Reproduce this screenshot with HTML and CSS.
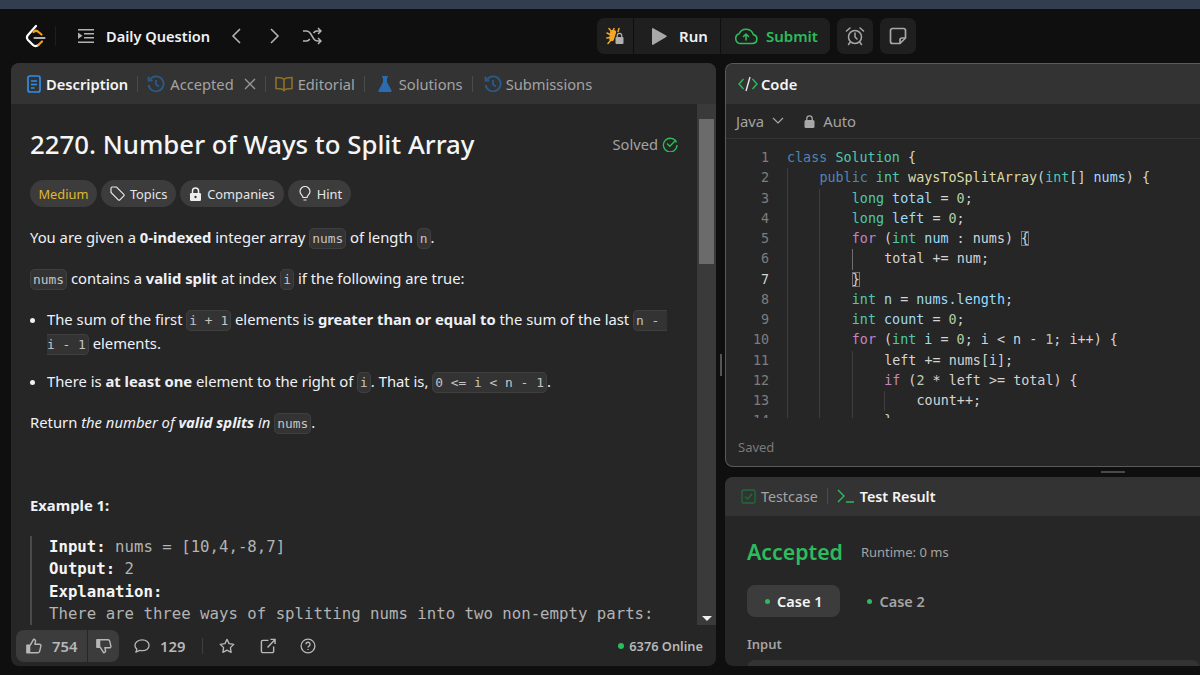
FILE: index.html
```html
<!DOCTYPE html>
<html lang="en">
<head>
  <meta charset="UTF-8" />
  <title>Number of Ways to Split Array</title>
  <link rel="stylesheet" href="styles.css">
</head>
<body>
  <div class="top-strip"></div>

  <nav class="navbar">
    <div class="nav-left">
      <svg class="logo" width="22" height="24" viewBox="0 0 22 24" fill="none" stroke-width="2.2" stroke-linecap="round" stroke-linejoin="round">
        <path d="M11 2 3 11c-1.300 1.500-1.300 3.500 0 5l5 5c1.500 1.500 3.800 1.500 5.300 0" stroke="#fff"/>
        <path d="M8.500 8c1.500-1.500 3.500-1.500 5 0l3 2.500M13.300 21l3.700-3.500" stroke="#f89f1b"/>
        <path d="M9.500 14h10" stroke="#b3b3b3"/>
      </svg>
      <span class="nav-sep"></span>
      <svg class="list-icon" width="18" height="18" viewBox="0 0 18 18" fill="#b3b3b3">
        <rect x="1" y="2" width="16" height="1.500"/><rect x="7" y="6" width="10" height="1.500"/><rect x="7" y="10" width="10" height="1.500"/><rect x="1" y="14.500" width="16" height="1.500"/><path d="M1 5.500 5.500 8.800 1 12z"/>
      </svg>
      <span class="nav-title">Daily Question</span>
      <svg class="chev chev-l" width="12" height="18" viewBox="0 0 12 18" fill="none" stroke="#b3b3b3" stroke-width="1.600"><path d="M10 2 3 9l7 7"/></svg>
      <svg class="chev chev-r" width="12" height="18" viewBox="0 0 12 18" fill="none" stroke="#b3b3b3" stroke-width="1.600"><path d="m2 2 7 7-7 7"/></svg>
      <svg class="shuffle" width="20" height="18" viewBox="0 0 20 18" fill="none" stroke="#b3b3b3" stroke-width="1.500"><path d="M1 4h3.500c2 0 3 1 4 2.500l3 5c1 1.500 2 2.500 4 2.500H19M1 14h3.500c1.500 0 2.500-.8 3.300-2M11.500 6c.8-1.200 1.800-2 3.500-2h4M16 1l3 3-3 3M16 11l3 3-3 3"/></svg>
    </div>
    <div class="nav-center">
      <div class="action-group">
        <span class="action action-bug">
          <svg width="18" height="18" viewBox="0 0 18 18" fill="none" stroke="#f5a623" stroke-width="1.500" stroke-linecap="round"><path d="M3 1.500 5 4M1 6l3 1.500M.8 11 4 10.500M2 16.500l2.500-3M7 4 8 1.500M13 1.500l-1 3"/><path d="M5 4.500c2-1.500 4-1 4.500.5L7 13c-1.500 1-3 0-3-1.500z" fill="#f5a623"/><rect x="9.500" y="10" width="8" height="7" rx="1" fill="#b0b0b0" stroke="none"/><path d="M11.200 10V8.700a2.300 2.300 0 0 1 4.600 0V10" stroke="#b0b0b0" stroke-width="1.200"/></svg>
        </span>
        <span class="action action-run">
          <svg width="15" height="17" viewBox="0 0 15 17"><path d="M0 1c0-.7.600-1.100 1.200-.8l13 7.300c.6.300.6 1.200 0 1.500l-13 7.800C.6 17.100 0 16.700 0 16z" fill="#a8a8a8"/></svg>
          Run
        </span>
        <span class="action action-submit">
          <svg width="24" height="18" viewBox="0 0 24 18" fill="none" stroke="#2cbb5d" stroke-width="1.600" stroke-linejoin="round"><path d="M6 16.500h12.500a4.500 4.500 0 0 0 .8-8.900A7.500 7.500 0 0 0 5.200 6.800 5 5 0 0 0 6 16.500z"/><path d="M12 13V7M9.500 9.500 12 7l2.500 2.500" stroke-linecap="round"/></svg>
          Submit
        </span>
      </div>
      <span class="icon-btn">
        <svg width="20" height="20" viewBox="0 0 20 20" fill="none" stroke="#a8a8a8" stroke-width="1.500"><circle cx="10" cy="11" r="6.500"/><path d="M10 7v4l2 2M1.500 5 5 2M18.500 5 15 2M5 16.500 3.500 18.500M15 16.500l1.500 2" stroke-linecap="round"/></svg>
      </span>
      <span class="icon-btn">
        <svg width="18" height="18" viewBox="0 0 18 18" fill="none" stroke="#a8a8a8" stroke-width="1.700" stroke-linejoin="round"><path d="M3.500 1.500h11a2 2 0 0 1 2 2V11l-5.500 5.500H3.500a2 2 0 0 1-2-2v-11a2 2 0 0 1 2-2z"/><path d="M16.500 11H13a2 2 0 0 0-2 2v3.500"/></svg>
      </span>
    </div>
  </nav>

  <main class="panels">
    <section class="panel panel-desc">
      <div class="tabs">
        <span class="tab tab-active">
          <svg width="14" height="18" viewBox="0 0 14 18" fill="none" stroke="#2f8fe8" stroke-width="1.700"><rect x="1" y="1" width="12" height="16" rx="2"/><path d="M4 6h6M4 9.500h6M4 13h3.500"/></svg>
          Description
        </span>
        <span class="tab-sep"></span>
        <span class="tab">
          <svg width="18" height="18" viewBox="0 0 18 18" fill="none" stroke="#2a5a88" stroke-width="1.800"><path d="M3 4.500A7.500 7.500 0 1 1 1.700 10"/><path d="M1.500 1.500v4h4M9 5v4.500l3 2"/></svg>
          Accepted
          <svg class="tab-close" width="12" height="12" viewBox="0 0 12 12" stroke="#999" stroke-width="1.400"><path d="m1 1 10 10M11 1 1 11"/></svg>
        </span>
        <span class="tab-sep"></span>
        <span class="tab">
          <svg width="18" height="16" viewBox="0 0 18 16" fill="none" stroke="#8a6d2a" stroke-width="1.700"><path d="M9 3.500C8 2 6 1.500 1 1.500v11c5 0 7 .5 8 2 1-1.500 3-2 8-2v-11c-5 0-7 .5-8 2zM9 3.500v11"/></svg>
          Editorial
        </span>
        <span class="tab-sep"></span>
        <span class="tab tab-flask">
          <svg width="14" height="18" viewBox="0 0 14 18"><path d="M4 1h6v1.500H9v4.500l4.500 8.500c.4.800-.1 1.500-1 1.500h-11c-.9 0-1.400-.7-1-1.500L5 7V2.500H4z" fill="#2b6cb0"/></svg>
          Solutions
        </span>
        <span class="tab-sep"></span>
        <span class="tab tab-subs">
          <svg width="18" height="18" viewBox="0 0 18 18" fill="none" stroke="#2a5a88" stroke-width="1.800"><path d="M3 4.500A7.500 7.500 0 1 1 1.700 10"/><path d="M1.500 1.500v4h4M9 5v4.500l3 2"/></svg>
          Submissions
        </span>
      </div>

      <div class="desc-body">
        <div class="desc-content">
          <div class="title-row">
            <h1>2270. Number of Ways to Split Array</h1>
            <span class="solved">Solved
              <svg width="16" height="16" viewBox="0 0 16 16" fill="none" stroke="#2cbb5d" stroke-width="1.300"><path d="M14.500 6.500A6.800 6.800 0 1 0 15 9"/><path d="m5 7.500 2.800 2.800L14 4"/></svg>
            </span>
          </div>
          <div class="chips">
            <span class="chip chip-medium">Medium</span>
            <span class="chip">
              <svg width="15" height="15" viewBox="0 0 15 15" fill="none" stroke="#e6e6e6" stroke-width="1.200"><path d="M1 2.200C1 1.500 1.500 1 2.200 1h4.300l7.300 7.300c.4.500.4 1.200 0 1.600l-3.900 3.900c-.4.400-1.100.4-1.600 0L1 6.500z"/></svg>
              Topics
            </span>
            <span class="chip">
              <svg width="13" height="14" viewBox="0 0 13 14" fill="#eee"><rect x="1" y="6" width="11" height="8" rx="1.200"/><path d="M3.500 6V4a3 3 0 0 1 6 0v2" fill="none" stroke="#eee" stroke-width="1.500"/><circle cx="6.500" cy="10" r="1.200" fill="#3c3c3c"/></svg>
              Companies
            </span>
            <span class="chip chip-hint">
              <svg width="12" height="16" viewBox="0 0 12 16" fill="none" stroke="#e6e6e6" stroke-width="1.200"><path d="M4 11.500C4 9.500 1 8.500 1 5.500a5 5 0 0 1 10 0c0 3-3 4-3 6zM4.500 14h3"/></svg>
              Hint
            </span>
          </div>

          <p>You are given a <b>0-indexed</b> integer array <code>nums</code> of length <code>n</code>.</p>
          <p><code>nums</code> contains a <b>valid split</b> at index <code>i</code> if the following are true:</p>
          <ul>
            <li>The sum of the first <code>i + 1</code> elements is <b>greater than or equal to</b> the sum of the last <code>n -&nbsp;<br>i - 1</code> elements.</li>
            <li>There is <b>at least one</b> element to the right of <code>i</code>. That is, <code>0 &lt;= i &lt; n - 1</code>.</li>
          </ul>
          <p>Return <i>the number of <b>valid splits</b> in</i> <code>nums</code>.</p>
          <p class="example-title"><b>Example 1:</b></p>
          <pre><b>Input:</b> nums = [10,4,-8,7]
<b>Output:</b> 2
<b>Explanation:</b>
There are three ways of splitting nums into two non-empty parts:</pre>
        </div>
        <div class="scrollbar">
          <div class="scroll-thumb"></div>
          <div class="scroll-arrow"></div>
        </div>
      </div>

      <div class="desc-footer">
        <div class="vote">
          <span class="vote-up">
            <svg width="16" height="16" viewBox="0 0 18 18" fill="none" stroke="#b8b8b8" stroke-width="1.600" stroke-linejoin="round"><path d="M1 8h3v8.500H1z" fill="#b8b8b8"/><path d="M4.500 8.500 8.500 1.500c1.500 0 2.500 1 2.200 2.500l-.7 3h5c1.200 0 2 1 1.700 2.200l-1.300 5.600c-.2 1-1 1.700-2 1.700H4.500"/></svg>
            754
          </span>
          <span class="vote-down">
            <svg width="16" height="16" viewBox="0 0 18 18" fill="none" stroke="#b8b8b8" stroke-width="1.600" stroke-linejoin="round"><path d="M1 2h3v8.500H1z" fill="#b8b8b8"/><path d="M4.500 10 8.500 16.500c1.500 0 2.500-1 2.200-2.500l-.7-3h5c1.200 0 2-1 1.700-2.200l-1.300-5.300c-.2-1-1-1.500-2-1.500H4.500"/></svg>
          </span>
        </div>
        <span class="foot-comment">
          <svg width="16" height="16" viewBox="0 0 17 17" fill="none" stroke="#b8b8b8" stroke-width="1.400" stroke-linejoin="round"><path d="M8.800 2C13 2 16 4.500 16 7.800s-3 5.700-7.200 5.700c-1 0-2-.1-2.800-.4L2 15l1-3.200C1.700 10.700 1 9.300 1 7.800 1 4.500 4.500 2 8.800 2z"/></svg>
          129
        </span>
        <span class="foot-sep"></span>
        <svg class="foot-icon" width="16" height="16" viewBox="0 0 17 17" fill="none" stroke="#b8b8b8" stroke-width="1.400" stroke-linejoin="round"><path d="m8.500 1.500 2.200 4.500 5 .7-3.600 3.500.8 5-4.400-2.400-4.400 2.400.8-5L1.300 6.700l5-.7z"/></svg>
        <svg class="foot-icon" width="16" height="16" viewBox="0 0 17 17" fill="none" stroke="#b8b8b8" stroke-width="1.500"><path d="M9 2.500H3A1.500 1.500 0 0 0 1.500 4v10A1.500 1.500 0 0 0 3 15.500h10a1.500 1.500 0 0 0 1.500-1.500V9M8 10l8-8.500M11 1.500h5v5"/></svg>
        <svg class="foot-icon" width="16" height="16" viewBox="0 0 17 17" fill="none" stroke="#b8b8b8" stroke-width="1.400"><circle cx="8.500" cy="8.500" r="7.300"/><path d="M6.300 6.700a2.200 2.200 0 1 1 3.300 1.900c-.7.400-1.100.8-1.100 1.500M8.500 11.600v1.200"/></svg>
        <span class="online"><span class="online-dot"></span>6376 Online</span>
      </div>
    </section>

    <div class="gutter-v"><span class="grip-v"></span></div>

    <div class="right-col">
      <section class="panel panel-code">
        <div class="tabs">
          <span class="tab tab-active">
            <svg width="20" height="16" viewBox="0 0 20 16" fill="none" stroke="#2cbb5d" stroke-width="1.400"><path d="M5.500 3 1 8l4.500 5M14.500 3 19 8l-4.500 5"/><path d="M12 1 8 15" stroke="#e8e8e8"/></svg>
            Code
          </span>
        </div>
        <div class="code-toolbar">
          <span>Java</span>
          <svg class="tool-chev" width="12" height="8" viewBox="0 0 12 8" fill="none" stroke="#a8a8a8" stroke-width="1.200"><path d="m1 1 5 5 5-5"/></svg>
          <svg class="tool-lock" width="11" height="13" viewBox="0 0 11 13" fill="#a8a8a8"><rect x=".5" y="5" width="10" height="8" rx="1.500"/><path d="M2.800 5V3.500a2.700 2.700 0 0 1 5.400 0V5" fill="none" stroke="#a8a8a8" stroke-width="1.300"/></svg>
          <span>Auto</span>
        </div>
        <div class="code-area">
          <div class="ln"><span class="num">1</span><span class="src"><span class="kw">class</span> <span class="ty">Solution</span> {</span></div>
          <div class="ln"><span class="num">2</span><i class="g"></i><span class="src"><span class="kw">public</span> <span class="ty">int</span> <span class="fn">waysToSplitArray</span>(<span class="ty">int</span>[] <span class="vr">nums</span>) {</span></div>
          <div class="ln"><span class="num">3</span><i class="g"></i><i class="g"></i><span class="src"><span class="ty">long</span> <span class="vr">total</span> = <span class="nb">0</span>;</span></div>
          <div class="ln"><span class="num">4</span><i class="g"></i><i class="g"></i><span class="src"><span class="ty">long</span> <span class="vr">left</span> = <span class="nb">0</span>;</span></div>
          <div class="ln"><span class="num">5</span><i class="g"></i><i class="g"></i><span class="src"><span class="ct">for</span> (<span class="ty">int</span> <span class="vr">num</span> : nums) <span class="match">{</span></span></div>
          <div class="ln"><span class="num">6</span><i class="g"></i><i class="g"></i><i class="g g-on"></i><span class="src">total += num;</span></div>
          <div class="ln ln-cur"><span class="num">7</span><i class="g"></i><i class="g"></i><span class="src"><span class="match">}</span></span></div>
          <div class="ln"><span class="num">8</span><i class="g"></i><i class="g"></i><span class="src"><span class="ty">int</span> <span class="vr">n</span> = <span class="vr">nums.length</span>;</span></div>
          <div class="ln"><span class="num">9</span><i class="g"></i><i class="g"></i><span class="src"><span class="ty">int</span> <span class="vr">count</span> = <span class="nb">0</span>;</span></div>
          <div class="ln"><span class="num">10</span><i class="g"></i><i class="g"></i><span class="src"><span class="ct">for</span> (<span class="ty">int</span> <span class="vr">i</span> = <span class="nb">0</span>; i &lt; n - <span class="nb">1</span>; i++) {</span></div>
          <div class="ln"><span class="num">11</span><i class="g"></i><i class="g"></i><i class="g"></i><span class="src">left += nums[i];</span></div>
          <div class="ln"><span class="num">12</span><i class="g"></i><i class="g"></i><i class="g"></i><span class="src"><span class="ct">if</span> (<span class="nb">2</span> * left &gt;= total) {</span></div>
          <div class="ln"><span class="num">13</span><i class="g"></i><i class="g"></i><i class="g"></i><i class="g"></i><span class="src">count++;</span></div>
          <div class="ln"><span class="num">14</span><i class="g"></i><i class="g"></i><i class="g"></i><span class="src">}</span></div>
        </div>
        <div class="saved">Saved</div>
      </section>

      <div class="gutter-h"><span class="grip-h"></span></div>

      <section class="panel panel-result">
        <div class="tabs tabs-result">
          <span class="tab">
            <svg width="15" height="15" viewBox="0 0 15 15" fill="none" stroke="#1f6b3a" stroke-width="1.300"><rect x="1" y="1" width="13" height="13" rx="1.500"/><path d="m4 7.500 2.500 2.500L11 5"/></svg>
            Testcase
          </span>
          <span class="tab-sep"></span>
          <span class="tab tab-active">
            <svg width="18" height="14" viewBox="0 0 18 14" fill="none" stroke="#2cbb5d" stroke-width="1.400"><path d="m1 1 6 6-6 6M9 13h8"/></svg>
            Test Result
          </span>
        </div>
        <div class="result-body">
          <div class="verdict"><span class="accepted">Accepted</span><span class="runtime">Runtime: 0 ms</span></div>
          <div class="cases">
            <span class="case case-on"><span class="case-dot"></span>Case 1</span>
            <span class="case"><span class="case-dot"></span>Case 2</span>
          </div>
          <div class="input-label">Input</div>
          <div class="input-box"></div>
        </div>
      </section>
    </div>
  </main>
</body>
</html>
```

FILE: styles.css
```css
* {
  box-sizing: border-box;
}

html, body {
  height: 100%;
}

body {
  margin: 0;
  display: flex;
  flex-direction: column;
  overflow: hidden;
  background-color: #0f0f0f;
  color: #eff1f6;
  font-family: "Noto Sans", Arial, sans-serif;
  font-size: 14.8px;
}

svg {
  display: block;
  flex-shrink: 0;
}

.top-strip {
  height: 9px;
  background-color: #323d4f;
}

/* Navbar */
.navbar {
  display: flex;
  justify-content: space-between;
  align-items: center;
  height: 54px;
  padding: 0 284px 0 25px;
}

.nav-left,
.nav-center {
  display: flex;
  align-items: center;
}

.nav-sep {
  width: 1px;
  height: 20px;
  margin: 0 21px 0 8px;
  background-color: #1f1f1f;
}

.nav-title {
  margin-left: 11px;
  font-size: 14.6px;
  font-weight: 600;
}

.chev-l {
  margin-left: 20px;
}

.chev-r {
  margin-left: 27px;
}

.shuffle {
  margin-left: 21px;
}

.action-group {
  display: flex;
  height: 36px;
  border-radius: 7px;
  overflow: hidden;
  gap: 1px;
}

.action {
  display: flex;
  align-items: center;
  background-color: #1f1f1f;
  font-size: 15px;
  font-weight: 600;
}

.action-bug {
  width: 36px;
  justify-content: center;
}

.action-run {
  width: 86px;
  padding-left: 18px;
  gap: 12px;
}

.action-submit {
  width: 109px;
  padding-left: 13px;
  gap: 8px;
  color: #2cbb5d;
}

.icon-btn {
  display: flex;
  align-items: center;
  justify-content: center;
  width: 36px;
  height: 36px;
  margin-left: 7px;
  border-radius: 7px;
  background-color: #1f1f1f;
}

/* Panels */
.panels {
  flex: 1;
  display: flex;
  min-height: 0;
  padding: 0 0 9px 11px;
}

.panel {
  display: flex;
  flex-direction: column;
  overflow: hidden;
  border-radius: 8px;
  background-color: #262626;
}

.panel-desc {
  width: 705px;
}

.tabs {
  display: flex;
  align-items: center;
  flex-shrink: 0;
  height: 41px;
  padding-left: 16px;
  background-color: #333;
}

.tab {
  display: flex;
  align-items: center;
  gap: 5px;
  color: #a3a3a3;
  font-size: 14.7px;
}

.tab-active {
  color: #f5f5f5;
  font-weight: 600;
}

.tab-flask {
  gap: 7px;
  margin-left: 4px;
}

.tab-subs {
  gap: 4px;
  margin-left: 2px;
}

.tab-sep {
  width: 1px;
  height: 16px;
  margin: 0 9px;
  background-color: #4a4a4a;
}

.tab-close {
  margin: 0 0 0 5px;
}

/* Description */
.desc-body {
  flex: 1;
  display: flex;
  min-height: 0;
}

.desc-content {
  flex: 1;
  min-width: 0;
  padding: 21px 29px 0 19px;
  overflow: hidden;
}

.title-row {
  display: flex;
  justify-content: space-between;
  align-items: center;
  height: 38px;
}

h1 {
  margin: 0;
  font-size: 25.8px;
  font-weight: 500;
  color: #f5f5f5;
}

.solved {
  display: flex;
  align-items: center;
  gap: 4px;
  margin-right: -10px;
  color: #a3a3a3;
  font-size: 14.7px;
}

.chips {
  display: flex;
  gap: 4px;
  margin: 17px 0 18px;
}

.chip {
  display: flex;
  align-items: center;
  gap: 5px;
  height: 27px;
  padding: 0 9px;
  border-radius: 14px;
  background-color: #3c3c3c;
  font-size: 12.8px;
  color: #e6e6e6;
}

.chip-medium {
  padding: 0 8.500px;
  color: #e0b82e;
}

.chip-hint {
  gap: 6px;
  padding: 0 9px 0 11px;
}

.desc-content p {
  margin: 0 0 17px;
  line-height: 24px;
}

.desc-content ul {
  margin: 0 0 17px;
  padding-left: 17px;
}

.desc-content li {
  margin-bottom: 14px;
  line-height: 24px;
}

code {
  padding: 2px;
  border: 1px solid #3f3f3f;
  border-radius: 5px;
  background-color: #333;
  color: #c4c4c4;
  font-family: "DejaVu Sans Mono", monospace;
  font-size: 12.9px;
  line-height: 1;
  -webkit-box-decoration-break: slice;
  box-decoration-break: slice;
}

.desc-content p.example-title {
  margin: 59px 0 18.500px;
}

pre {
  margin: 0;
  padding-left: 17px;
  border-left: 2px solid #4a4a4a;
  color: #b3b3b3;
  font-family: "DejaVu Sans Mono", monospace;
  font-size: 15.7px;
  line-height: 22.5px;
}

pre b {
  color: #f5f5f5;
}

.scrollbar {
  display: flex;
  flex-direction: column;
  justify-content: space-between;
  width: 19px;
  padding: 15px 2px 4px;
  background-color: #3a3a3a;
}

.scroll-thumb {
  height: 145px;
  background-color: #6b6b6b;
}

.scroll-arrow {
  align-self: center;
  width: 0;
  height: 0;
  border-left: 5px solid transparent;
  border-right: 5px solid transparent;
  border-top: 5px solid #eee;
}

.desc-footer {
  display: flex;
  align-items: center;
  flex-shrink: 0;
  height: 41px;
  padding: 0 13px 0 5px;
  color: #b8b8b8;
  font-weight: 600;
}

.vote {
  display: flex;
  height: 32px;
  border-radius: 8px;
  overflow: hidden;
  gap: 1px;
}

.vote-up,
.vote-down {
  display: flex;
  align-items: center;
  background-color: #3c3c3c;
}

.vote-up {
  width: 71px;
  padding-left: 10px;
  gap: 10px;
}

.vote-down {
  width: 31px;
  padding-left: 8px;
}

.foot-comment {
  display: flex;
  align-items: center;
  gap: 10px;
  margin-left: 15px;
}

.foot-sep {
  width: 1px;
  height: 16px;
  margin: 0 16.500px 0 16.500px;
  background-color: #3f3f3f;
}

.foot-icon {
  margin-right: 24.500px;
}

.online {
  display: flex;
  align-items: center;
  margin-left: auto;
  font-size: 12.8px;
  color: #b8b8b8;
}

.online-dot {
  width: 6px;
  height: 6px;
  margin-right: 5px;
  border-radius: 50%;
  background-color: #2cbb5d;
}

.gutter-v {
  display: flex;
  align-items: center;
  justify-content: center;
  width: 9px;
  flex-shrink: 0;
}

.grip-v {
  width: 2px;
  height: 22px;
  background-color: #555;
}

/* Code editor */
.right-col {
  flex: 1;
  display: flex;
  flex-direction: column;
  min-width: 0;
}

.panel-code {
  height: 404px;
  flex-shrink: 0;
  border: 1px solid #5a5a5a;
  border-right: none;
  border-radius: 8px 0 0 8px;
}

.panel-code .tabs {
  height: 40px;
  padding-left: 12px;
}

.panel-code .tab {
  gap: 3px;
}

.code-toolbar {
  display: flex;
  align-items: center;
  flex-shrink: 0;
  height: 35px;
  padding-left: 10px;
  border-bottom: 1px solid #333;
  color: #a3a3a3;
  font-size: 14.8px;
}

.tool-chev {
  margin: 0 20px 0 8px;
}

.tool-lock {
  margin-right: 8px;
}

.code-area {
  height: 279px;
  flex-shrink: 0;
  padding-top: 9px;
  overflow: hidden;
  color: #d4d4d4;
  font-family: "DejaVu Sans Mono", monospace;
  font-size: 13.4px;
}

.ln {
  display: flex;
  height: 20.25px;
  line-height: 20.25px;
  white-space: pre;
}

.num {
  width: 43px;
  margin-right: 18px;
  text-align: right;
  color: #7d7d7d;
}

.ln-cur .num {
  color: #d4d4d4;
}

.g {
  width: 32.400px;
  border-left: 1px solid #3d3d3d;
}

.g-on {
  border-left-color: #6e6e6e;
}

.kw {
  color: #4f85b8;
}

.ty {
  color: #4ec9b0;
}

.fn {
  color: #dcdcaa;
}

.vr {
  color: #9cdcfe;
}

.ct {
  color: #c586c0;
}

.nb {
  color: #b5cea8;
}

.match {
  outline: 1px solid #777;
  outline-offset: -1px;
}

.saved {
  padding: 20px 0 0 12px;
  color: #7a7a7a;
  font-size: 13px;
}

.gutter-h {
  display: flex;
  align-items: center;
  height: 10px;
  flex-shrink: 0;
}

.grip-h {
  width: 24px;
  height: 2px;
  margin-left: 376px;
  background-color: #4a4a4a;
}

/* Test result */
.panel-result {
  flex: 1;
  min-height: 0;
  border-radius: 8px 0 0 8px;
}

.tabs-result {
  height: 39px;
  padding-bottom: 1px;
}

.tabs-result .tab {
  font-size: 14.3px;
}

.result-body {
  padding-left: 22px;
}

.verdict {
  display: flex;
  align-items: center;
  gap: 18px;
  height: 36px;
  margin-top: 17px;
}

.accepted {
  color: #2cbb5d;
  font-size: 21.300px;
  font-weight: 600;
}

.runtime {
  margin-top: 1px;
  color: #a3a3a3;
  font-size: 13px;
}

.cases {
  display: flex;
  gap: 9px;
  margin-top: 16px;
}

.case {
  display: flex;
  align-items: center;
  height: 32px;
  padding: 0 18px;
  border-radius: 8px;
  color: #a3a3a3;
  font-size: 14.5px;
  font-weight: 600;
}

.case-on {
  background-color: #3c3c3c;
  color: #f5f5f5;
}

.case-dot {
  width: 5px;
  height: 5px;
  margin-right: 7px;
  border-radius: 50%;
  background-color: #2cbb5d;
}

.input-label {
  margin-top: 18px;
  color: #a3a3a3;
  font-size: 13px;
  font-weight: 600;
}

.input-box {
  height: 30px;
  margin-top: 7px;
  border-radius: 8px;
  background-color: #333;
}
```
